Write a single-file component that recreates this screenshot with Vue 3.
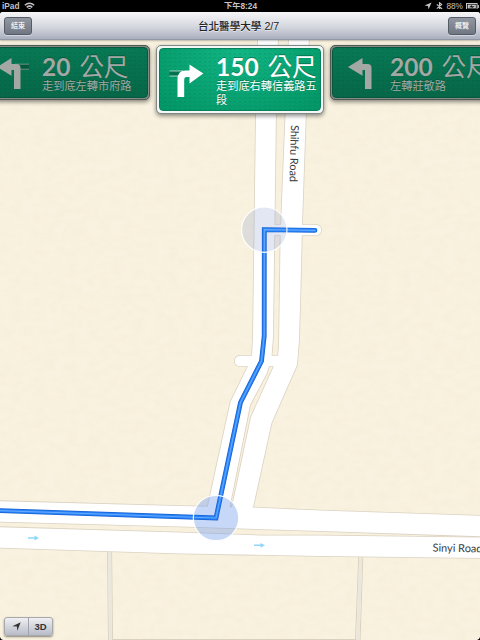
<template>
  <div class="screen">
    <svg class="map" viewBox="0 0 480 640" width="480" height="640">
      <defs>
        <filter id="paper" x="0" y="0" width="100%" height="100%">
          <feTurbulence type="fractalNoise" baseFrequency="0.09 0.14" numOctaves="3" seed="4" />
          <feColorMatrix values="0 0 0 0 0.74  0 0 0 0 0.64  0 0 0 0 0.36  0.5 0 0 0 -0.17" />
        </filter>
      </defs>
      <rect width="480" height="640" fill="#f9f2e0" />
      <rect width="480" height="640" filter="url(#paper)" opacity="0.35" />

      <g class="lanes">
        <path d="M107.5 545 L108.5 640 M111.5 545 L112.5 640" />
        <path d="M359 550 L355.5 640 M363 550 L360 640" />
        <path d="M112 639.5 H356" />
      </g>
      <path class="lane-fill" d="M109.5 545 L110.5 640" />
      <path class="lane-fill" d="M361 550 L357.8 640" />

      <g class="casing">
        <polygon v-for="(r, i) in roads" :key="i" :points="r" />
        <path d="M240 361 H283 M264 230 H316" />
      </g>
      <g class="surface">
        <polygon v-for="(r, i) in roads" :key="i" :points="r" />
        <path d="M240 361 H283 M264 230 H316" />
      </g>

      <circle class="halo start" cx="216" cy="518" r="22.7" />
      <circle class="halo end" cx="264.3" cy="229.7" r="22.7" />

      <g class="route">
        <polyline class="route-edge" :points="route" />
        <polyline class="route-body" :points="route" />
        <polyline class="route-shine" :points="route" />
      </g>
      <circle class="ring" cx="264.3" cy="229.7" r="22.7" />
      <circle class="ring" cx="216" cy="518" r="22.7" />

      <g class="one-way">
        <path d="M28 538 H36 M254 545.3 H262" />
        <path class="tip" d="M34.5 535.6 L39 538 L34.5 540.4 Z M260.5 542.9 L265 545.3 L260.5 547.7 Z" />
      </g>

      <text class="road-name" transform="translate(291 125) rotate(91.5)" textLength="57">Shihfu Road</text>
      <text class="road-name" transform="translate(432.5 551.5) rotate(1)" textLength="50">Sinyi Road</text>

      <path d="M0 637 Q0.5 639.5 3 640 H0 Z M480 637 Q479.5 639.5 477 640 H480 Z" />
    </svg>

    <header class="status">
      <div class="status-left">
        <span>iPad</span>
        <svg width="11" height="9" viewBox="0 0 11 9" fill="none" stroke="#c4c4c4" stroke-width="1.5">
          <path d="M0.8 3.3 Q5.5 -0.8 10.2 3.3 M2.7 5.3 Q5.5 3 8.3 5.3" />
          <path d="M3.9 6.6 Q5.5 5.6 7.1 6.6 L5.5 8.5 Z" fill="#c4c4c4" stroke="none" />
        </svg>
      </div>
      <span class="clock">下午8:24</span>
      <div class="status-right">
        <svg width="8" height="8" viewBox="0 0 8 8"><path d="M7.5 0.5 L4.5 7.5 L4 4 L0.5 3.6 Z" fill="#c4c4c4" /></svg>
        <svg class="bt" width="7" height="9" viewBox="0 0 7 9" fill="none" stroke="#c4c4c4" stroke-width="1.1">
          <path d="M0.8 2.4 L5.7 6.5 L3.5 8.3 V0.7 L5.7 2.5 L0.8 6.6" />
        </svg>
        <span class="percent">88%</span>
        <svg width="13" height="7" viewBox="0 0 13 7">
          <rect x="0.5" y="0.5" width="10.6" height="6" fill="none" stroke="#c4c4c4" />
          <rect x="1.7" y="1.6" width="8.2" height="3.8" fill="#c4c4c4" />
          <rect x="11.6" y="2" width="1.3" height="3" fill="#c4c4c4" />
          <path d="M3 4.2 L6 2 V3.2 H8.7 L5.7 5.2 V4.2 Z" fill="#111" />
        </svg>
      </div>
    </header>

    <nav class="nav">
      <button class="nav-btn">結束</button>
      <h1>台北醫學大學 2/7</h1>
      <button class="nav-btn">概覽</button>
    </nav>

    <section class="signs">
      <article v-for="s in signs" :key="s.distance" class="sign" :class="{ active: s.active }">
        <div class="sign-face">
          <svg class="turn" width="38" height="36" viewBox="0 0 38 36">
            <template v-if="s.turn === 'right'">
              <path class="band" d="M1.5 9 H21 V14 H1.5 Z" />
              <path class="side" d="M1.5 9 H15 M1.5 14 H10" />
              <path class="arrow" d="M9.5 35 V17.5 Q9.5 8.5 17.5 8.5 H21.5 V2.5 L35.3 11.5 L21.5 21.5 V15 H18.5 Q16.2 15 16.2 18 V35 Z" />
            </template>
            <g v-else :class="{ lined: s.lines }">
              <path v-if="s.lines" class="band" d="M22 8.2 H38 V13.2 H22 Z" />
              <path v-if="s.lines" class="side" d="M24 8.2 H38 M29 13.2 H38" />
              <path class="arrow" d="M23 33 V14 H20.5 V19.7 L6 11 L20.5 2 V8 H25.5 Q29.5 8 29.5 12 V33 Z" />
            </g>
          </svg>
          <div class="words">
            <div class="distance">{{ s.distance }} <span>公尺</span></div>
            <div class="detail">{{ s.detail }}</div>
          </div>
        </div>
      </article>
    </section>

    <div class="controls">
      <button>
        <svg width="9" height="9" viewBox="0 0 9 9"><path d="M8.7 0.3 L5.3 8.7 L4.9 4.5 L0.3 4.2 Z" fill="#333" /></svg>
      </button>
      <button>3D</button>
    </div>
  </div>
</template>

<script setup>
const signs = [
  { distance: '20', detail: '走到底左轉市府路', turn: 'left', lines: true },
  { distance: '150', detail: '走到底右轉信義路五段', turn: 'right', lines: true, active: true },
  { distance: '200', detail: '左轉莊敬路', turn: 'left', lines: false }
]

const route = '-5,510.5 216,518 240.5,402.5 261.5,361 264.2,336 264.3,229.7 315,230.3'

const roads = [
  // Shihfu Road, west carriageway
  '258,36 278,36 276,110 274.5,225 273,337 271.5,357 267,373 250,405 229,510 207,510 230.5,402 249,364 252,356 253,337 254.5,225 256,110',
  // Shihfu Road, east carriageway
  '289,36 309,36 306,110 302,225 300.5,290 299,340 297,365 271.5,423 252,512 231,512 251,417 273.5,367 278,357 279,345 280.5,240 282,200 285.7,110',
  // Sinyi Road
  '-5,501 180,506 252,507.5 320,510.5 485,516 485,536.5 320,531 180,526.5 -5,521.5',
  '-5,527 180,532.5 260,535.5 320,535.5 485,537.5 485,558 320,556 180,553.5 -5,547.5'
]
</script>

<style>
body {
  margin: 0;
}
</style>

<style scoped>
.screen {
  position: relative;
  width: 480px;
  height: 640px;
  overflow: hidden;
  display: flex;
  flex-direction: column;
  background: #f8f1df;
  font-family: "Liberation Sans", "Noto Sans CJK TC", sans-serif;
}

.map {
  position: absolute;
  top: 0;
  left: 0;
}

.lanes path {
  fill: none;
  stroke: #d9d0c0;
  stroke-width: 1;
}

.lane-fill {
  stroke: #ebe7dd;
  stroke-width: 3.4;
}

.casing {
  fill: #dbd2c3;
  stroke: #dbd2c3;
  stroke-width: 1.6;
}

.casing path {
  fill: none;
  stroke-width: 12;
  stroke-linecap: round;
}

.surface {
  fill: #fff;
}

.surface path {
  fill: none;
  stroke: #fff;
  stroke-width: 10.5;
  stroke-linecap: round;
}

.halo.start {
  fill: rgba(112, 156, 236, 0.4);
}

.halo.end {
  fill: rgba(138, 158, 208, 0.25);
}

.ring {
  fill: none;
  stroke: #fff;
  stroke-width: 1.2;
  stroke-opacity: 0.9;
}

.route {
  fill: none;
  stroke-linecap: round;
}

.route-edge {
  stroke: #1560d0;
  stroke-width: 4.8;
}

.route-body {
  stroke: #2680f6;
  stroke-width: 3.4;
}

.route-shine {
  stroke: #62a8ff;
  stroke-width: 1.2;
}

.one-way {
  stroke: #8fd8fb;
  stroke-width: 1.5;
  fill: none;
}

.one-way .tip {
  fill: #8fd8fb;
  stroke: none;
}

.road-name {
  font-family: Lato, sans-serif;
  font-size: 11px;
  fill: #3a3a3a;
}

.status {
  position: relative;
  flex: none;
  height: 12px;
  display: grid;
  grid-template-columns: 1fr auto 1fr;
  align-items: center;
  padding: 0 1px 0 2px;
  background: #000;
  color: #c4c4c4;
  font-size: 8.3px;
  font-weight: bold;
  line-height: 12px;
}

.status-left,
.status-right {
  display: flex;
  align-items: center;
  gap: 4px;
}

.status-right {
  justify-content: flex-end;
  gap: 3px;
}

.bt {
  margin-left: 1px;
}

.percent {
  font-weight: normal;
}

.nav {
  position: relative;
  flex: none;
  box-sizing: border-box;
  height: 28px;
  display: flex;
  align-items: center;
  justify-content: space-between;
  padding: 0 4px;
  background: linear-gradient(#f6f6f8, #d5d7de 55%, #aaafbf);
  border-bottom: 1px solid #9297a4;
  border-radius: 3px 3px 0 0;
  box-shadow: 0 -3px 0 #000, 0 1px 2px rgba(0, 0, 0, 0.25);
}

.nav h1 {
  margin: 0 3px 0 0;
  font-size: 10.6px;
  font-weight: 500;
  color: #222;
  text-shadow: 0 1px 0 rgba(255, 255, 255, 0.6);
}

.nav-btn {
  width: 28px;
  height: 18px;
  padding: 0;
  border: 1px solid #555c68;
  border-radius: 3px;
  background: linear-gradient(#9298a2, #707783);
  box-shadow: 0 1px 0 rgba(255, 255, 255, 0.4);
  color: #eceef0;
  font-family: inherit;
  font-size: 7px;
  font-weight: bold;
  line-height: 15px;
}

.signs {
  position: relative;
  display: flex;
  justify-content: center;
  align-items: flex-start;
  gap: 6px;
  margin: 5px -20px 0 -20px;
}

.sign {
  box-sizing: border-box;
  flex: none;
  width: 168px;
  height: 55px;
  padding: 1px;
  border: 1px solid #4f5a55;
  border-radius: 5px;
  background: #858b87;
  box-shadow: 0 2px 4px rgba(0, 0, 0, 0.45);
}

.sign-face {
  box-sizing: border-box;
  height: 100%;
  display: flex;
  padding: 7px 0 0 9px;
  border-radius: 4px;
  border: 1px solid #0a573e;
  overflow: hidden;
  background:
    radial-gradient(circle at 50% 0, transparent 1.6px, rgba(0, 60, 30, 0.14) 2px, transparent 2.6px) 0 0 / 5px 4px,
    linear-gradient(#087955, #066848);
  color: #a4a8a5;
}

.sign.active {
  height: 69px;
  padding: 2px;
  border-color: #7d8984;
  background: #f5f7f6;
}

.sign.active .sign-face {
  padding: 6px 0 0 8px;
  border-color: #07815a;
  background:
    radial-gradient(circle at 50% 0, transparent 1.6px, rgba(0, 70, 40, 0.15) 2px, transparent 2.6px) 0 0 / 5px 4px,
    radial-gradient(ellipse at 50% 0, #12b685, #049868 90%);
  color: #fff;
}

.turn {
  flex: none;
  margin-top: 1px;
  overflow: visible;
}

.active .turn {
  margin-top: 7px;
}

.lined {
  transform: translateX(-3px);
}

.arrow {
  fill: currentColor;
}

.band {
  fill: rgba(0, 60, 38, 0.45);
}

.side {
  fill: none;
  stroke: currentColor;
  stroke-width: 0.8;
  opacity: 0.8;
}

.words {
  margin-left: 10px;
  white-space: nowrap;
  text-shadow: 0 -1px 0 rgba(0, 50, 30, 0.4);
}

.distance {
  font-family: Lato, "Noto Sans CJK TC", sans-serif;
  font-size: 24.5px;
  font-weight: bold;
  line-height: 24px;
  height: 24px;
}

.distance span {
  font-weight: normal;
  margin-left: 3px;
}

.detail {
  width: 103px;
  white-space: normal;
  word-break: break-all;
  font-size: 11.2px;
  line-height: 14px;
}

.controls {
  position: relative;
  align-self: flex-start;
  box-sizing: border-box;
  display: flex;
  width: 49px;
  height: 19px;
  margin: auto 0 4px 4px;
  border: 1px solid #a8a9ac;
  border-radius: 3px;
  background: linear-gradient(#f0f0f3, #b8bcc8);
  box-shadow: 0 1px 2px rgba(0, 0, 0, 0.45);
}

.controls button {
  flex: 1;
  display: flex;
  align-items: center;
  justify-content: center;
  padding: 0;
  border: 0;
  background: none;
  color: #333;
  font-family: inherit;
  font-size: 9.5px;
  font-weight: bold;
}

.controls button + button {
  border-left: 1px solid #a0a3ab;
}
</style>
